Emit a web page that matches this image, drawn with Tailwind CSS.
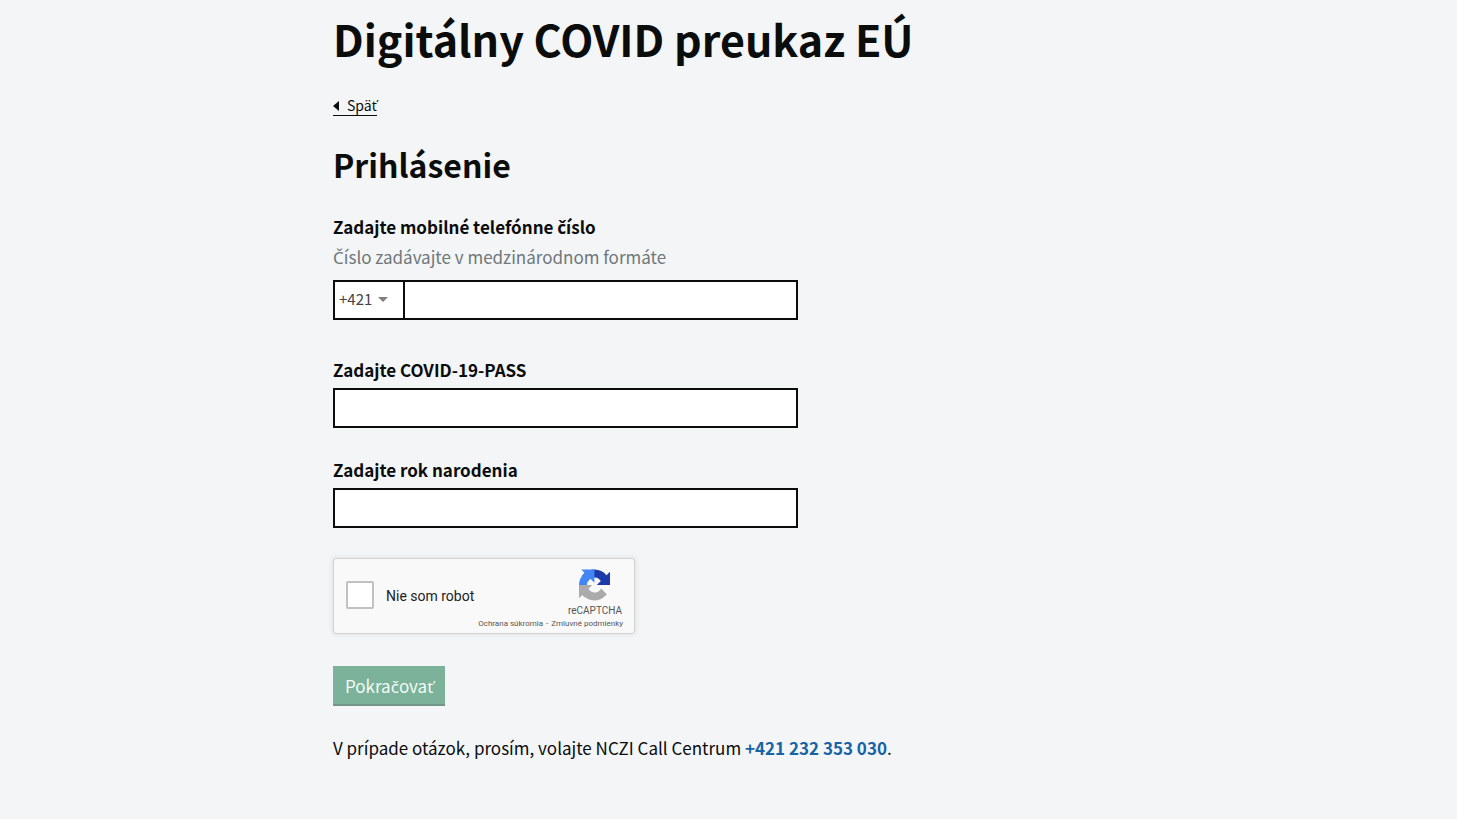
<!DOCTYPE html>
<html lang="sk">
<head>
<meta charset="utf-8">
<meta name="viewport" content="width=device-width, initial-scale=1">
<title>Digitálny COVID preukaz EÚ</title>
<script src="https://cdn.jsdelivr.net/npm/@tailwindcss/browser@4"></script>
</head>
<body class="min-h-screen bg-[#f3f5f7] px-4 font-['Noto_Sans_CJK_SC','Noto_Sans',sans-serif] text-[17px] leading-[25px] text-[#0b0c0c]">
<!-- Letters with a caron are set in Noto Sans, because the CJK face has no glyphs for them. -->
<main class="mx-auto max-w-[791px] pt-[13px] pb-10">
  <h1 class="text-[43px] leading-[50px] font-bold">Digitálny COVID preukaz EÚ</h1>
  <a href="#" class="mt-[33px] inline-flex items-center gap-2 border-b border-[#0b0c0c] text-[14px] leading-[19px]">
    <svg class="h-[10px] w-[6px]" viewBox="0 0 6 10" fill="#0b0c0c" aria-hidden="true"><path d="M0 5 6 0V10z"/></svg>
    <span>Spä<span class="font-['Noto_Sans'] leading-none">ť</span></span>
  </a>
  <h2 class="mt-[28px] text-[32px] leading-[40px] font-bold">Prihlásenie</h2>

  <form class="mt-[30px]">
    <div class="max-w-[465px]">
      <label for="phone" class="block font-bold">Zadajte mobilné telefónne <span class="font-['Noto_Sans'] leading-none">č</span>íslo</label>
      <p id="phone-hint" class="mt-[5px] text-[#6f777b]"><span class="font-['Noto_Sans'] leading-none">Č</span>íslo zadávajte v medzinárodnom formáte</p>
      <div class="mt-[11px] flex h-10 border-2 border-[#0b0c0c] bg-white">
        <div class="relative w-[70px] shrink-0 border-r-2 border-[#0b0c0c]">
          <select aria-label="Predvoľba krajiny" class="h-full w-full appearance-none pb-1 pl-1 text-[15px] text-[#444]">
            <option>+421</option>
          </select>
          <svg class="pointer-events-none absolute top-[15px] right-[15px] h-[5px] w-[10px]" viewBox="0 0 10 5" fill="#808080" aria-hidden="true"><path d="M0 0H10L5 5z"/></svg>
        </div>
        <input id="phone" type="tel" aria-describedby="phone-hint" class="min-w-0 flex-1 px-2">
      </div>
    </div>
    <div class="mt-[37px] max-w-[465px]">
      <label for="pass" class="block font-bold">Zadajte COVID-19-PASS</label>
      <input id="pass" type="text" class="mt-[6px] block h-10 w-full border-2 border-[#0b0c0c] bg-white px-2">
    </div>
    <div class="mt-[29px] max-w-[465px]">
      <label for="year" class="block font-bold">Zadajte rok narodenia</label>
      <input id="year" type="text" class="mt-[6px] block h-10 w-full border-2 border-[#0b0c0c] bg-white px-2">
    </div>

    <div class="mt-[30px] flex h-[76px] max-w-[302px] justify-between rounded-[3px] border border-[#d3d3d3] bg-[#f9f9f9] pl-3 font-[Roboto,sans-serif] shadow-[0_0_4px_1px_rgba(0,0,0,0.08)]">
      <div class="flex items-center gap-3 pb-0.5">
        <input id="robot" type="checkbox" class="h-7 w-7 appearance-none rounded-[2px] border-2 border-[#c1c1c1] bg-white">
        <label for="robot" class="pt-0.5 text-[14px] leading-[17px] whitespace-nowrap text-[#222]">Nie som robot</label>
      </div>
      <div class="-ml-8 flex flex-col items-end pt-[10px] pr-[11px] text-[#555]">
        <div class="mr-px flex flex-col items-center">
          <svg class="h-8 w-[31px]" viewBox="0 0 64 64" aria-hidden="true">
            <path fill="#1c3aa9" d="M64 31.955l-.033-1.37V4.687l-7.16 7.16C50.948 4.674 42.033.093 32.05.093c-10.4 0-19.622 4.96-25.458 12.64l11.736 11.86a15.55 15.55 0 0 1 4.754-5.334c2.05-1.6 4.952-2.906 8.968-2.906.485 0 .86.057 1.135.163 4.976.393 9.288 3.14 11.828 7.124l-8.307 8.307L64 31.953"/>
            <path fill="#4285f4" d="M31.862.094l-1.37.033H4.594l7.16 7.16C4.58 13.147 0 22.06 0 32.046c0 10.4 4.96 19.622 12.64 25.458L24.5 45.768a15.55 15.55 0 0 1-5.334-4.754c-1.6-2.05-2.906-4.952-2.906-8.968 0-.485.057-.86.163-1.135.393-4.976 3.14-9.288 7.124-11.828l8.307 8.307L31.86.095"/>
            <path fill="#ababab" d="M.001 32.045l.033 1.37v25.898l7.16-7.16c5.86 7.173 14.774 11.754 24.76 11.754 10.4 0 19.622-4.96 25.458-12.64l-11.736-11.86a15.55 15.55 0 0 1-4.754 5.334c-2.05 1.6-4.952 2.906-8.968 2.906-.485 0-.86-.057-1.135-.163-4.976-.393-9.288-3.14-11.828-7.124l8.307-8.307c-10.522.04-22.4.066-27.295-.005"/>
          </svg>
          <div class="mt-1 text-[10px] leading-[12px]">reCAPTCHA</div>
        </div>
        <div class="flex gap-[3px] pt-px text-[8px] leading-[12px] whitespace-nowrap">
          <a href="#">Ochrana súkromia</a><span aria-hidden="true">-</span><a href="#">Zmluvné podmienky</a>
        </div>
      </div>
    </div>

    <button type="submit" class="mt-8 block h-10 border-b-2 border-[#73978a] bg-[#7bb299] px-3 text-[#f3fbf7]">Pokra<span class="font-['Noto_Sans'] leading-none">č</span>ova<span class="font-['Noto_Sans'] leading-none">ť</span></button>
  </form>

  <p class="mt-[29px]">V prípade otázok, prosím, volajte NCZI Call Centrum <a href="tel:+421232353030" class="font-bold text-[#1763a6]">+421 232 353 030</a>.</p>
</main>
</body>
</html>
